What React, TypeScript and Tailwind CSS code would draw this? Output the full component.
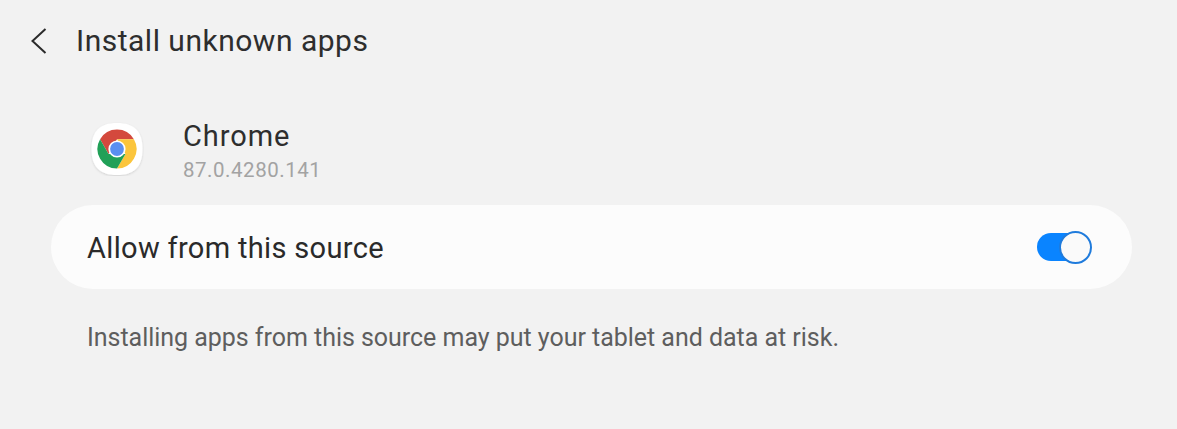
function ChromeIcon() {
  return (
    <svg viewBox="0 0 54 54" className="h-[54px] w-[54px]">
      <defs>
        <filter id="sh" x="-20%" y="-20%" width="140%" height="140%">
          <feDropShadow dx="0" dy="1" stdDeviation="1" floodColor="#000" floodOpacity="0.14" />
        </filter>
      </defs>
      <path
        d="M27 1C44 1 52.5 9 52.5 27S44 53 27 53 1.5 45 1.5 27 10 1 27 1Z"
        fill="#fff"
        filter="url(#sh)"
      />
      <path d="M10.1 17.25A19.5 19.5 0 0 1 43.9 17.25H27L18.55 32Z" fill="#d4493d" />
      <path d="M43.9 17.25A19.5 19.5 0 0 1 27 46.5L35.45 32 27 17.25Z" fill="#fbc53c" />
      <path d="M27 46.5A19.5 19.5 0 0 1 10.1 17.25L18.55 32H35.45Z" fill="#21a057" />
      <circle cx="27" cy="27" r="8.6" fill="#fff" />
      <circle cx="27" cy="27" r="6.9" fill="#5a8ff0" />
    </svg>
  );
}

export default function App() {
  return (
    <div className="h-[429px] w-[1177px] overflow-hidden bg-[#f2f2f2] font-['Roboto',sans-serif]">
      {/* Header */}
      <div className="flex h-[81px] items-center pl-[30px]">
        <svg viewBox="0 0 18 28" className="h-[28px] w-[18px]" fill="none">
          <path d="M15.5 2 2.5 14l13 12" stroke="#2b2b2b" strokeWidth="2" />
        </svg>
        <h1 className="ml-[28px] text-[30px] font-normal leading-none tracking-[0.5px] text-[#2e2e2e]">
          Install unknown apps
        </h1>
      </div>

      {/* App info */}
      <div className="mt-[40px] flex h-[55px] items-center pl-[90px]">
        <ChromeIcon />
        <div className="ml-[39px] flex flex-col pt-[5px]">
          <span className="text-[29px] leading-[30px] tracking-[0.95px] text-[#2e2e2e]">Chrome</span>
          <span className="mt-[7px] text-[20.5px] leading-[24px] tracking-[0.53px] text-[#a3a3a3]">87.0.4280.141</span>
        </div>
      </div>

      {/* Toggle row */}
      <div className="mx-[51px] mt-[29px] flex h-[84px] w-[1081px] items-center justify-between rounded-[42px] bg-[#fcfcfc] pl-[36px] pr-[42px]">
        <span className="pt-[2px] text-[29px] leading-none tracking-[0.33px] text-[#2a2a2a]">
          Allow from this source
        </span>
        <div className="relative h-[28px] w-[53px] rounded-full bg-[#0a84ff]">
          <div className="absolute right-[-2px] top-[-2.5px] h-[33px] w-[33px] rounded-full border-2 border-[#1f7bdc] bg-[#fafafa]" />
        </div>
      </div>

      <p className="ml-[87px] mt-[34px] text-[25px] leading-[30px] tracking-[-0.03px] text-[#5e5e5e]">
        Installing apps from this source may put your tablet and data at risk.
      </p>
    </div>
  );
}
